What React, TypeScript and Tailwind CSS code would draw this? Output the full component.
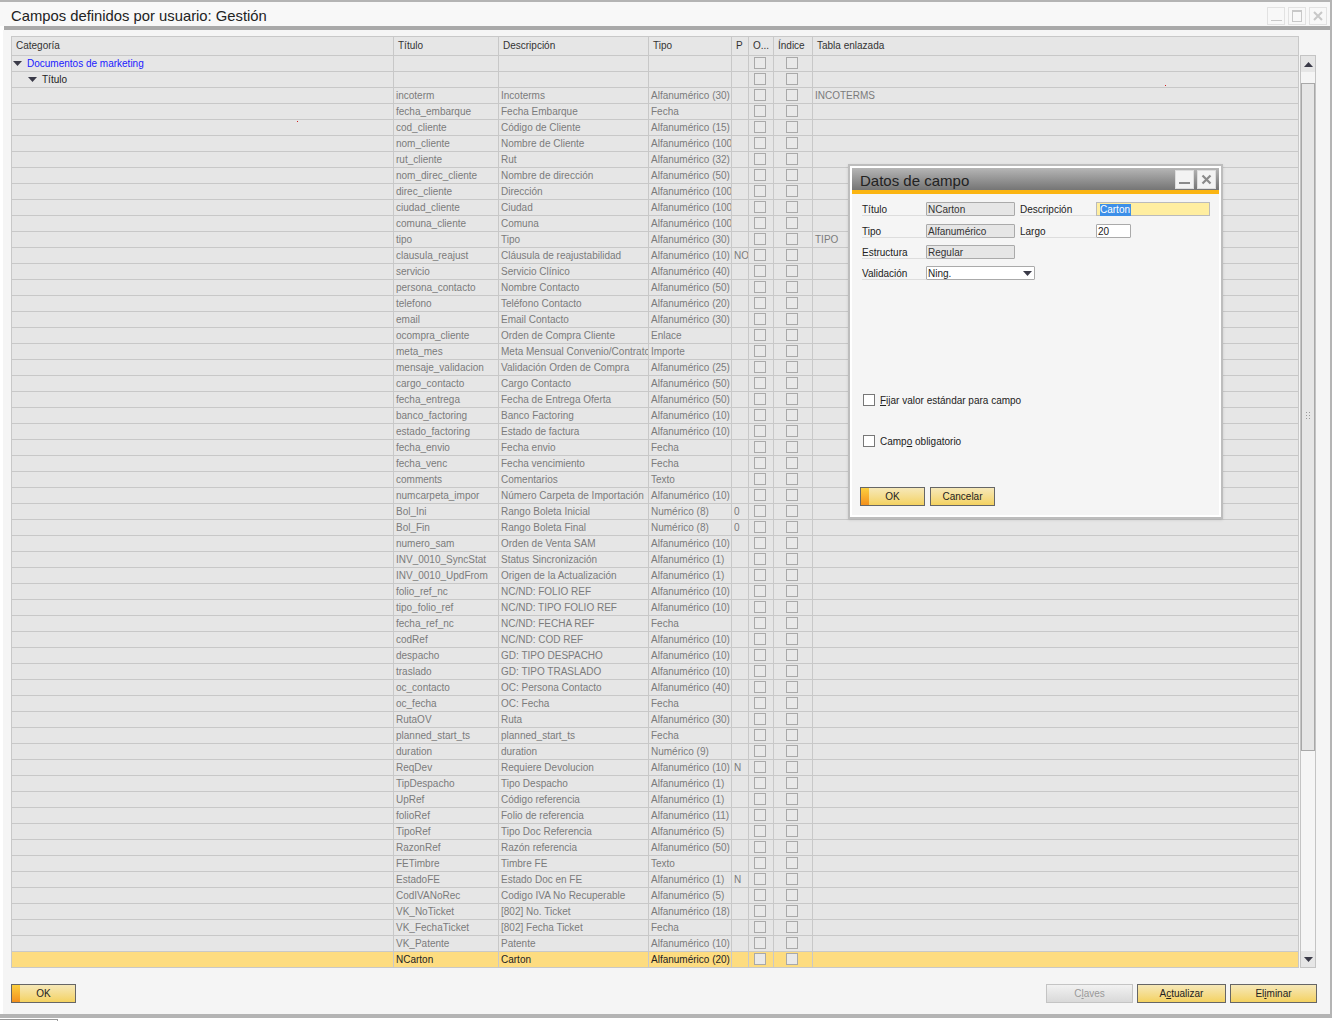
const font = { fontFamily: '"Liberation Sans", Arial, sans-serif' }

type Row = [string, string, string, string?, string?]

const rows: Row[] = [
  ['incoterm', 'Incoterms', 'Alfanumérico (30)', '', 'INCOTERMS'],
  ['fecha_embarque', 'Fecha Embarque', 'Fecha'],
  ['cod_cliente', 'Código de Cliente', 'Alfanumérico (15)'],
  ['nom_cliente', 'Nombre de Cliente', 'Alfanumérico (100)'],
  ['rut_cliente', 'Rut', 'Alfanumérico (32)'],
  ['nom_direc_cliente', 'Nombre de dirección', 'Alfanumérico (50)'],
  ['direc_cliente', 'Dirección', 'Alfanumérico (100)'],
  ['ciudad_cliente', 'Ciudad', 'Alfanumérico (100)'],
  ['comuna_cliente', 'Comuna', 'Alfanumérico (100)'],
  ['tipo', 'Tipo', 'Alfanumérico (30)', '', 'TIPO'],
  ['clausula_reajust', 'Cláusula de reajustabilidad', 'Alfanumérico (10)', 'NO'],
  ['servicio', 'Servicio Clínico', 'Alfanumérico (40)'],
  ['persona_contacto', 'Nombre Contacto', 'Alfanumérico (50)'],
  ['telefono', 'Teléfono Contacto', 'Alfanumérico (20)'],
  ['email', 'Email Contacto', 'Alfanumérico (30)'],
  ['ocompra_cliente', 'Orden de Compra Cliente', 'Enlace'],
  ['meta_mes', 'Meta Mensual Convenio/Contrato', 'Importe'],
  ['mensaje_validacion', 'Validación Orden de Compra', 'Alfanumérico (25)'],
  ['cargo_contacto', 'Cargo Contacto', 'Alfanumérico (50)'],
  ['fecha_entrega', 'Fecha de Entrega Oferta', 'Alfanumérico (50)'],
  ['banco_factoring', 'Banco Factoring', 'Alfanumérico (10)'],
  ['estado_factoring', 'Estado de factura', 'Alfanumérico (10)'],
  ['fecha_envio', 'Fecha envio', 'Fecha'],
  ['fecha_venc', 'Fecha vencimiento', 'Fecha'],
  ['comments', 'Comentarios', 'Texto'],
  ['numcarpeta_impor', 'Número Carpeta de Importación', 'Alfanumérico (10)'],
  ['Bol_Ini', 'Rango Boleta Inicial', 'Numérico (8)', '0'],
  ['Bol_Fin', 'Rango Boleta Final', 'Numérico (8)', '0'],
  ['numero_sam', 'Orden de Venta SAM', 'Alfanumérico (10)'],
  ['INV_0010_SyncStat', 'Status Sincronización', 'Alfanumérico (1)'],
  ['INV_0010_UpdFrom', 'Origen de la Actualización', 'Alfanumérico (1)'],
  ['folio_ref_nc', 'NC/ND: FOLIO REF', 'Alfanumérico (10)'],
  ['tipo_folio_ref', 'NC/ND: TIPO FOLIO REF', 'Alfanumérico (10)'],
  ['fecha_ref_nc', 'NC/ND: FECHA REF', 'Fecha'],
  ['codRef', 'NC/ND: COD REF', 'Alfanumérico (10)'],
  ['despacho', 'GD: TIPO DESPACHO', 'Alfanumérico (10)'],
  ['traslado', 'GD: TIPO TRASLADO', 'Alfanumérico (10)'],
  ['oc_contacto', 'OC: Persona Contacto', 'Alfanumérico (40)'],
  ['oc_fecha', 'OC: Fecha', 'Fecha'],
  ['RutaOV', 'Ruta', 'Alfanumérico (30)'],
  ['planned_start_ts', 'planned_start_ts', 'Fecha'],
  ['duration', 'duration', 'Numérico (9)'],
  ['ReqDev', 'Requiere Devolucion', 'Alfanumérico (10)', 'N'],
  ['TipDespacho', 'Tipo Despacho', 'Alfanumérico (1)'],
  ['UpRef', 'Código referencia', 'Alfanumérico (1)'],
  ['folioRef', 'Folio de referencia', 'Alfanumérico (11)'],
  ['TipoRef', 'Tipo Doc Referencia', 'Alfanumérico (5)'],
  ['RazonRef', 'Razón referencia', 'Alfanumérico (50)'],
  ['FETimbre', 'Timbre FE', 'Texto'],
  ['EstadoFE', 'Estado Doc en FE', 'Alfanumérico (1)', 'N'],
  ['CodIVANoRec', 'Codigo IVA No Recuperable', 'Alfanumérico (5)'],
  ['VK_NoTicket', '[802] No. Ticket', 'Alfanumérico (18)'],
  ['VK_FechaTicket', '[802] Fecha Ticket', 'Fecha'],
  ['VK_Patente', 'Patente', 'Alfanumérico (10)'],
]

const gridCols = 'grid grid-cols-[382px_105px_150px_83px_17px_25px_39px_486px]'
const cell = 'border-r border-[#c8c8c8] overflow-hidden whitespace-nowrap flex items-center'

function Check() {
  return <span className="block w-[12px] h-[12px] border border-[#a9a9a9] bg-[#e9e9e9]" />
}

function Arrow({ className = '' }: { className?: string }) {
  return (
    <svg width="9" height="5" viewBox="0 0 9 5" className={`shrink-0 ${className}`}>
      <path d="M0 0h9L4.5 5z" fill="#3a3a48" />
    </svg>
  )
}

function GridRow({
  title,
  desc,
  type,
  p = '',
  link = '',
  category,
  selected,
}: {
  title?: string
  desc?: string
  type?: string
  p?: string
  link?: string
  category?: React.ReactNode
  selected?: boolean
}) {
  const text = selected ? 'text-[#222222]' : 'text-[#7b7b7b]'
  return (
    <div className={`${gridCols} h-[16px] border-b border-[#c8c8c8] text-[10px] ${text} ${selected ? 'bg-[#fddc80]' : 'bg-[#e6e6e6]'}`}>
      <div className={cell}>{category}</div>
      <div className={`${cell} pl-[2px]`}>{title}</div>
      <div className={`${cell} pl-[2px]`}>{desc}</div>
      <div className={`${cell} pl-[2px]`}>{type}</div>
      <div className={`${cell} pl-[2px]`}>{p}</div>
      <div className={`${cell} pl-[5px] pb-[1px]`}><Check /></div>
      <div className={`${cell} pl-[12px] pb-[1px]`}><Check /></div>
      <div className={`${cell} pl-[2px]`}>{link}</div>
    </div>
  )
}

function YellowButton({ children, accent, className = '' }: { children: React.ReactNode; accent?: boolean; className?: string }) {
  return (
    <button className={`relative h-[19px] border border-[#666666] bg-gradient-to-b from-[#f6e8b8] to-[#f4d25f] text-[10px] text-[#222222] flex items-center justify-center ${className}`}>
      {accent && <span className="absolute left-0 top-0 bottom-0 w-[8px] bg-gradient-to-b from-[#fbcf3e] to-[#f3901c]" />}
      <span className="relative">{children}</span>
    </button>
  )
}

function FieldLabel({ children, className = 'w-[64px]' }: { children: React.ReactNode; className?: string }) {
  return <div className={`${className} h-[14px] pt-[1px] border-b border-[#dddddd] text-[10px] leading-[13px] text-[#222222]`}>{children}</div>
}

function ReadOnly({ children }: { children: React.ReactNode }) {
  return <div className="w-[89px] h-[14px] border border-[#aaaaaa] rounded-[1px] bg-[#e6e6e6] pl-[1px] pt-[1px] text-[10px] leading-[12px] text-[#333333]">{children}</div>
}

function Dialog() {
  return (
    <div className="absolute left-[848px] top-[164px] w-[375px] h-[355px] border-2 border-[#bdbdbd] bg-white p-[2px] flex flex-col shadow-sm">
      <div className="h-[22px] bg-gradient-to-b from-[#b6b6b6] to-[#757575] flex items-center justify-between pl-[8px] pr-[3px]">
        <span className="text-[15px] text-[#222222] pt-[4px]">Datos de campo</span>
        <div className="flex gap-[3px]">
          <span className="w-[19px] h-[19px] border border-[#dddddd] bg-[#f3f3f3] flex items-end justify-center pb-[4px]">
            <span className="block w-[11px] h-[2px] bg-[#8a8a8a]" />
          </span>
          <span className="w-[19px] h-[19px] border border-[#dddddd] bg-[#f3f3f3] flex items-center justify-center">
            <svg width="11" height="11" viewBox="0 0 11 11">
              <path d="M1.5 1.5l8 8M9.5 1.5l-8 8" stroke="#8a8a8a" strokeWidth="2.2" />
            </svg>
          </span>
        </div>
      </div>
      <div className="h-[4px] bg-[#fbb512]" />
      <div className="flex-1 bg-[#f5f5f5] pl-[10px] pt-[8px] flex flex-col">
        <div className="flex items-center">
          <FieldLabel>Título</FieldLabel>
          <ReadOnly>NCarton</ReadOnly>
          <div className="ml-[5px]"><FieldLabel className="w-[76px]">Descripción</FieldLabel></div>
          <div className="w-[114px] h-[14px] border border-[#bbbbbb] bg-[#ffeea0] pl-[3px] pt-[1px] text-[10px] leading-[12px]">
            <span className="inline-block bg-[#3d8fe8] text-white pr-[1px]">Carton</span>
          </div>
        </div>
        <div className="flex items-center mt-[8px]">
          <FieldLabel>Tipo</FieldLabel>
          <ReadOnly>Alfanumérico</ReadOnly>
          <div className="ml-[5px]"><FieldLabel className="w-[76px]">Largo</FieldLabel></div>
          <div className="w-[35px] h-[14px] border border-[#aaaaaa] rounded-[1px] bg-white pl-[1px] pt-[1px] text-[10px] leading-[12px] text-[#222222]">20</div>
        </div>
        <div className="flex items-center mt-[7px]">
          <FieldLabel>Estructura</FieldLabel>
          <ReadOnly>Regular</ReadOnly>
        </div>
        <div className="flex items-center mt-[7px]">
          <FieldLabel>Validación</FieldLabel>
          <div className="w-[109px] h-[14px] border border-[#aaaaaa] rounded-[1px] bg-white pl-[1px] pr-[2px] pt-[1px] text-[10px] leading-[12px] text-[#222222] flex items-center justify-between">
            <span>Ning.</span>
            <Arrow />
          </div>
        </div>
        <label className="flex items-center h-[14px] mt-[113px] ml-[1px] text-[10px] text-[#222222]">
          <span className="w-[12px] h-[12px] border border-[#777777] bg-white mr-[5px]" />
          <span><u>F</u>ijar valor estándar para campo</span>
        </label>
        <label className="flex items-center h-[14px] mt-[27px] ml-[1px] text-[10px] text-[#222222]">
          <span className="w-[12px] h-[12px] border border-[#777777] bg-white mr-[5px]" />
          <span>Camp<u>o</u> obligatorio</span>
        </label>
        <div className="flex gap-[5px] mt-[39px] -ml-[2px]">
          <YellowButton accent className="w-[65px]">OK</YellowButton>
          <YellowButton className="w-[65px]">Cancelar</YellowButton>
        </div>
      </div>
    </div>
  )
}

function Scrollbar() {
  return (
    <div className="w-[16px] ml-[1px] mt-[19px] border border-[#c4c4c4] bg-[#f5f5f5] flex flex-col">
      <div className="h-[16px] bg-[#e6e6e6] flex items-center justify-center">
        <Arrow className="rotate-180" />
      </div>
      <div className="flex-1 pt-[11px] pb-[200px]">
        <div className="h-full border border-[#a8a8a8] bg-[#e6e6e6] relative">
          <div className="absolute left-[3px] top-[327px] w-[7px] h-[8px] bg-[radial-gradient(#9a9a9a_1px,transparent_1px)] bg-[size:3px_3px]" />
        </div>
      </div>
      <div className="h-[16px] bg-[#e6e6e6] flex items-center justify-center">
        <Arrow />
      </div>
    </div>
  )
}

export default function App() {
  return (
    <div className="relative w-[1332px] h-[1021px] overflow-hidden bg-white" style={font}>
      <div className="h-[1018px] border-t-2 border-b-[4px] border-r-2 border-[#b4b4b4] flex flex-col">
        <div className="h-[24px] bg-[#f8f8f8] flex items-center justify-between pl-[11px] pr-[3px]">
          <span className="text-[14.8px] text-[#222222] pt-[5px]">Campos definidos por usuario: Gestión</span>
          <div className="flex gap-[3px] pt-[3px]">
            <span className="w-[18px] h-[18px] border border-[#e2e2e2] flex items-end justify-center pb-[3px]">
              <span className="block w-[11px] h-[1px] bg-[#c8c8c8]" />
            </span>
            <span className="w-[18px] h-[18px] border border-[#e2e2e2] flex items-center justify-center">
              <span className="block w-[10px] h-[12px] border border-[#c8c8c8] border-t-2" />
            </span>
            <span className="w-[18px] h-[18px] border border-[#e2e2e2] flex items-center justify-center">
              <svg width="10" height="10" viewBox="0 0 10 10">
                <path d="M1 1l8 8M9 1l-8 8" stroke="#c8c8c8" strokeWidth="2" />
              </svg>
            </span>
          </div>
        </div>
        <div className="h-[4px] ml-[4px] bg-[#a9a9a9]" />
        <div className="flex-1 bg-[#f5f5f5] ml-[3px] flex flex-col pl-[8px] pt-[6px]">
          <div className="flex">
            <div className="w-[1288px] border-l border-[#c8c8c8]">
              <div className={`${gridCols} h-[20px] bg-[#e6e6e6] border-y border-[#c8c8c8] text-[10px] text-[#333333]`}>
                <div className={`${cell} pl-[4px] pb-[2px]`}>Categoría</div>
                <div className={`${cell} pl-[4px] pb-[2px]`}>Título</div>
                <div className={`${cell} pl-[4px] pb-[2px]`}>Descripción</div>
                <div className={`${cell} pl-[4px] pb-[2px]`}>Tipo</div>
                <div className={`${cell} pl-[4px] pb-[2px]`}>P</div>
                <div className={`${cell} pl-[4px] pb-[2px]`}>O...</div>
                <div className={`${cell} pl-[4px] pb-[2px]`}>Índice</div>
                <div className={`${cell} pl-[4px] pb-[2px]`}>Tabla enlazada</div>
              </div>
              <GridRow
                category={
                  <span className="flex items-center gap-[5px] pl-[1px] text-[#1a1aff]">
                    <Arrow />
                    Documentos de marketing
                  </span>
                }
              />
              <GridRow
                category={
                  <span className="flex items-center gap-[5px] pl-[16px] text-[#222222]">
                    <Arrow />
                    Título
                  </span>
                }
              />
              {rows.map((r) => (
                <GridRow key={r[0]} title={r[0]} desc={r[1]} type={r[2]} p={r[3]} link={r[4]} />
              ))}
              <GridRow selected title="NCarton" desc="Carton" type="Alfanumérico (20)" />
            </div>
            <Scrollbar />
          </div>
          <div className="flex items-start mt-[16px] pr-[13px]">
            <YellowButton accent className="w-[65px]">OK</YellowButton>
            <div className="ml-auto flex gap-[4px]">
              <button className="w-[87px] h-[19px] border border-[#c4c4c4] bg-gradient-to-b from-[#f2f2f2] to-[#d9d9d9] text-[10px] text-[#999999]">
                C<u>l</u>aves
              </button>
              <YellowButton className="w-[89px]">A<u>c</u>tualizar</YellowButton>
              <YellowButton className="w-[87px]">El<u>i</u>minar</YellowButton>
            </div>
          </div>
        </div>
      </div>
      <Dialog />
      <span className="absolute left-[297px] top-[121px] w-[1px] h-[1px] bg-[#d02020]" />
      <span className="absolute left-[1165px] top-[85px] w-[1px] h-[1px] bg-[#d02020]" />
      <span className="absolute left-0 top-[1019px] w-[58px] h-[2px] border-t border-r border-[#999999]" />
    </div>
  )
}
